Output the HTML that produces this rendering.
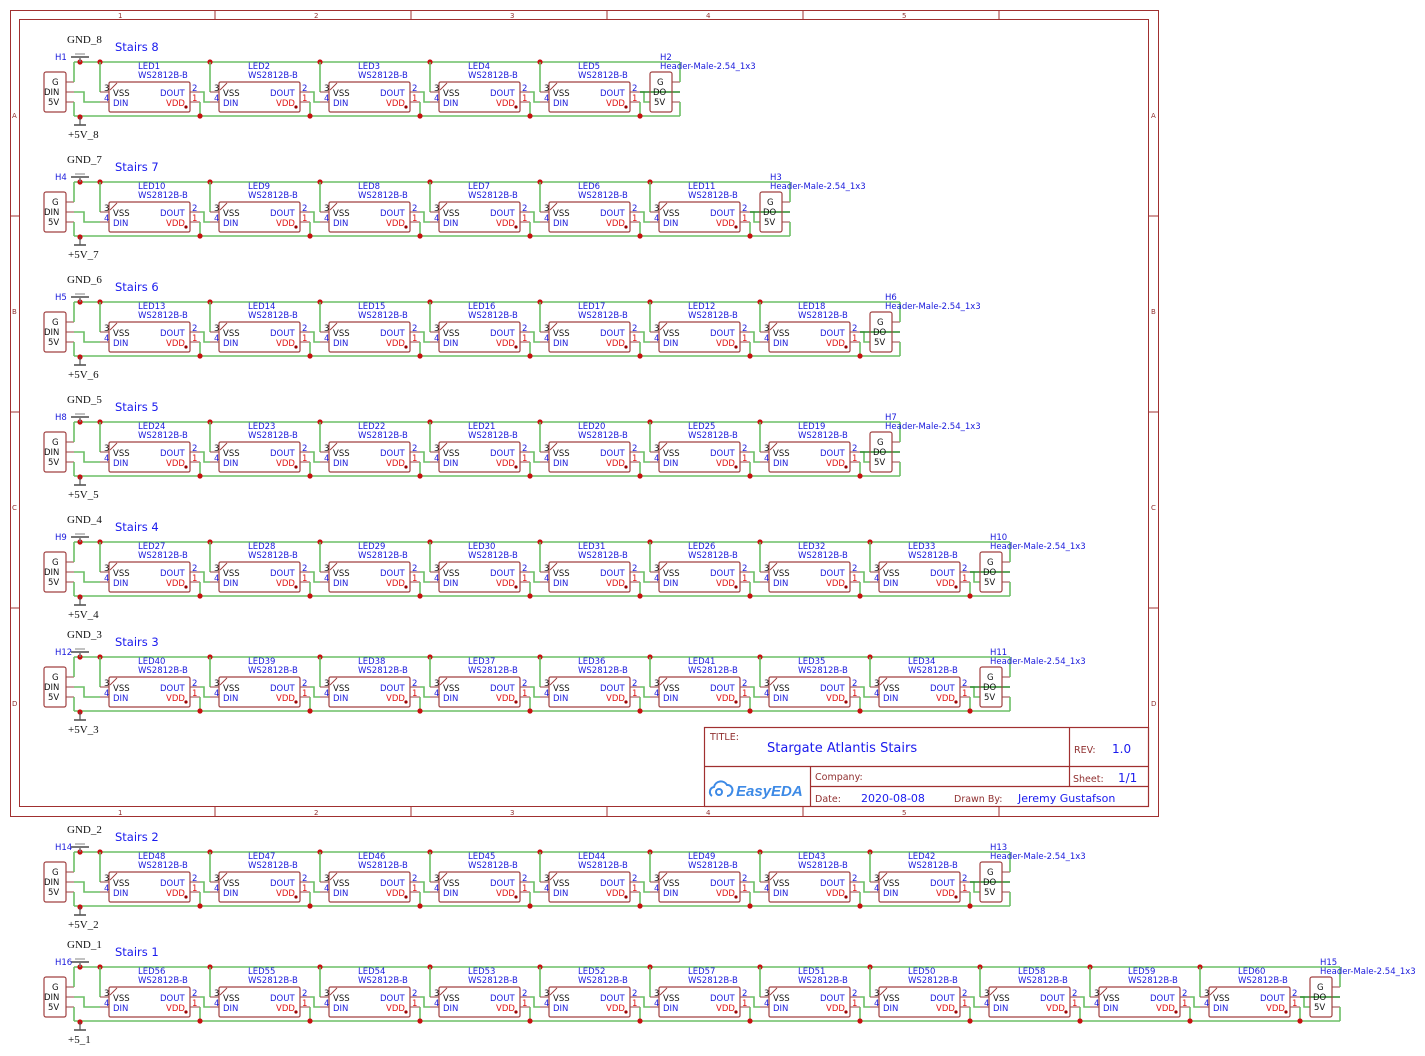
<!DOCTYPE html>
<html><head><meta charset="utf-8">
<style>
html,body{margin:0;padding:0;background:#fff}
svg{display:block}
text{font-family:"DejaVu Sans","Liberation Sans",sans-serif}
.w{stroke:#6cbf66;stroke-width:1.6;fill:none}
.p{stroke:#9a4040;stroke-width:1;fill:none}
.b{fill:#1a1adc;font-size:8.5px}
.r{fill:#e01010;font-size:8.5px}
.k{fill:#111;font-size:8.5px}
.g{font-family:"Liberation Serif",serif;font-size:11px;fill:#111}
.st{fill:#1a1aee;font-size:11.5px}
.fr{stroke:#a03030;fill:none;stroke-width:1}
.fn{fill:#903030;font-size:7px}
</style></head><body>
<svg width="1425" height="1056" viewBox="0 0 1425 1056" xmlns="http://www.w3.org/2000/svg" xmlns:xlink="http://www.w3.org/1999/xlink">
<defs>
<g id="u">
 <circle cx="0" cy="0" r="2.6" fill="#c81010"/>
 <polyline class="w" points="0,0 0,30"/>
 <line class="p" x1="0" y1="30" x2="9" y2="30"/>
 <line class="p" x1="0" y1="40" x2="9" y2="40"/>
 <line class="p" x1="90" y1="30" x2="100" y2="30"/>
 <line class="p" x1="90" y1="40" x2="100" y2="40"/>
 <polyline class="w" points="100,30 104,30 104,40 110,40"/>
 <polyline class="w" points="100,40 100,54"/>
 <circle cx="100" cy="54" r="2.6" fill="#c81010"/>
 <rect x="9" y="20" width="81" height="30" rx="1.5" fill="#fff" stroke="#a04040" stroke-width="1.2"/>
 <path d="M10,28 L17,21" stroke="#a04040" stroke-width="1"/>
 <circle cx="86" cy="45" r="1.6" fill="#900"/>
 <text class="b" x="38" y="16">WS2812B-B</text>
 <text class="k" x="13" y="34">VSS</text>
 <text class="b" x="13" y="44">DIN</text>
 <text class="b" x="60" y="34">DOUT</text>
 <text class="r" x="66" y="44">VDD</text>
 <text class="k" x="4" y="29">3</text>
 <text class="b" x="4" y="39">4</text>
 <text class="b" x="92" y="29">2</text>
 <text class="r" x="92" y="39">1</text>
</g>
<g id="hl">
 <rect x="44" y="10" width="22" height="40" rx="2" fill="#fff" stroke="#a04040" stroke-width="1.2"/>
 <line class="p" x1="66" y1="20" x2="74" y2="20" stroke="#555"/>
 <line class="p" x1="66" y1="30" x2="74" y2="30"/>
 <line class="p" x1="66" y1="40" x2="74" y2="40"/>
 <polyline class="w" points="74,20 74,0"/>
 <polyline class="w" points="74,40 74,54"/>
 <polyline class="w" points="74,30 84,30 84,40 100,40"/>
 <circle cx="80" cy="0" r="2.6" fill="#c81010"/>
 <line x1="80" y1="0" x2="80" y2="-5" stroke="#777" stroke-width="1.5"/>
 <line x1="71" y1="-5" x2="89" y2="-5" stroke="#777" stroke-width="2"/>
 <line x1="75" y1="-8" x2="85" y2="-8" stroke="#999" stroke-width="1.2"/>
 <circle cx="80" cy="55" r="2.6" fill="#c81010"/>
 <line x1="80" y1="55" x2="80" y2="63" stroke="#555" stroke-width="1.2"/>
 <line x1="74" y1="63" x2="86" y2="63" stroke="#555" stroke-width="1.6"/>
 <text class="k" x="52" y="23">G</text>
 <text class="k" x="44" y="33">DIN</text>
 <text class="k" x="48" y="43">5V</text>
</g>
<g id="hr">
 <line x1="-10" y1="30" x2="30" y2="30" stroke="#2e8b2e" stroke-width="1.6"/>
 <rect x="0" y="10" width="22" height="40" rx="2" fill="none" stroke="#a04040" stroke-width="1.2"/>
 <line class="p" x1="22" y1="20" x2="30" y2="20"/>
 <line class="p" x1="22" y1="40" x2="30" y2="40"/>
 <polyline class="w" points="30,20 30,0"/>
 <polyline class="w" points="30,40 30,54"/>
 <text class="k" x="7" y="23">G</text>
 <text class="k" x="3" y="33">DO</text>
 <text class="k" x="4" y="43">5V</text>
</g>
</defs>

<!-- frame -->
<rect class="fr" x="10.5" y="10.5" width="1148" height="806"/>
<rect class="fr" x="19.5" y="19.5" width="1129" height="787"/>
<g stroke="#a03030" stroke-width="1">
<line x1="215" y1="10" x2="215" y2="19"/><line x1="411" y1="10" x2="411" y2="19"/><line x1="607" y1="10" x2="607" y2="19"/><line x1="803" y1="10" x2="803" y2="19"/><line x1="999" y1="10" x2="999" y2="19"/>
<line x1="215" y1="807" x2="215" y2="816"/><line x1="411" y1="807" x2="411" y2="816"/><line x1="607" y1="807" x2="607" y2="816"/><line x1="803" y1="807" x2="803" y2="816"/><line x1="999" y1="807" x2="999" y2="816"/>
<line x1="10" y1="216" x2="19" y2="216"/><line x1="10" y1="412" x2="19" y2="412"/><line x1="10" y1="608" x2="19" y2="608"/>
<line x1="1149" y1="216" x2="1158" y2="216"/><line x1="1149" y1="412" x2="1158" y2="412"/><line x1="1149" y1="608" x2="1158" y2="608"/>
</g>
<text class="fn" x="118" y="18">1</text><text class="fn" x="314" y="18">2</text><text class="fn" x="510" y="18">3</text><text class="fn" x="706" y="18">4</text><text class="fn" x="902" y="18">5</text>
<text class="fn" x="118" y="815">1</text><text class="fn" x="314" y="815">2</text><text class="fn" x="510" y="815">3</text><text class="fn" x="706" y="815">4</text><text class="fn" x="902" y="815">5</text>
<text class="fn" x="12" y="118">A</text><text class="fn" x="12" y="314">B</text><text class="fn" x="12" y="510">C</text><text class="fn" x="12" y="706">D</text>
<text class="fn" x="1151" y="118">A</text><text class="fn" x="1151" y="314">B</text><text class="fn" x="1151" y="510">C</text><text class="fn" x="1151" y="706">D</text>

<!-- title block -->
<g stroke="#a03030" stroke-width="1.2" fill="none">
<rect x="704.5" y="727.5" width="444" height="79"/>
<line x1="704" y1="766.5" x2="1149" y2="766.5"/>
<line x1="810" y1="786.5" x2="1149" y2="786.5"/>
<line x1="1069.5" y1="727" x2="1069.5" y2="787"/>
<line x1="810.5" y1="766" x2="810.5" y2="807"/>
</g>
<text x="710" y="740" style="fill:#903030;font-size:9.5px">TITLE:</text>
<text x="767" y="752" style="fill:#1a1aee;font-size:13px">Stargate Atlantis Stairs</text>
<text x="1074" y="753" style="fill:#903030;font-size:9.5px">REV:</text>
<text x="1112" y="753" style="fill:#1a1aee;font-size:12px">1.0</text>
<text x="815" y="780" style="fill:#903030;font-size:9.5px">Company:</text>
<text x="1073" y="782" style="fill:#903030;font-size:9.5px">Sheet:</text>
<text x="1118" y="782" style="fill:#1a1aee;font-size:12px">1/1</text>
<text x="815" y="802" style="fill:#903030;font-size:9.5px">Date:</text>
<text x="861" y="802" style="fill:#1a1aee;font-size:11px">2020-08-08</text>
<text x="954" y="802" style="fill:#903030;font-size:9.5px">Drawn By:</text>
<text x="1018" y="802" style="fill:#1a1aee;font-size:11px">Jeremy Gustafson</text>
<path d="M712,796 a5,5 0 0 1 2,-9 a7,7 0 0 1 13,-2 a5,5 0 0 1 5,7 a5,5 0 0 1 -5,4 M716,792 a3,3 0 1 1 6,0 a3,3 0 1 1 -6,0" stroke="#3d8ae6" stroke-width="2" fill="none"/>
<text x="736" y="796" style="fill:#3d8ae6;font-size:15px;font-weight:bold;font-style:italic;font-family:'Liberation Sans',sans-serif">EasyEDA</text>

<!-- Row 1 -->
<g transform="translate(0,62)">
<line class="w" x1="74" y1="0" x2="680" y2="0"/><line class="w" x1="74" y1="54" x2="680" y2="54"/>
<use href="#hl"/>
<text class="g" x="67" y="-19">GND_8</text><text class="g" x="68" y="76">+5V_8</text>
<text class="b" x="55" y="-2">H1</text><text class="st" x="115" y="-11">Stairs 8</text>
<use href="#u" x="100"/><use href="#u" x="210"/><use href="#u" x="320"/><use href="#u" x="430"/><use href="#u" x="540"/>
<text class="b" x="138" y="7">LED1</text><text class="b" x="248" y="7">LED2</text><text class="b" x="358" y="7">LED3</text><text class="b" x="468" y="7">LED4</text><text class="b" x="578" y="7">LED5</text>
<use href="#hr" x="650"/>
<text class="b" x="660" y="-2">H2</text><text class="b" x="660" y="7">Header-Male-2.54_1x3</text>
</g>

<!-- Row 2 -->
<g transform="translate(0,182)">
<line class="w" x1="74" y1="0" x2="790" y2="0"/><line class="w" x1="74" y1="54" x2="790" y2="54"/>
<use href="#hl"/>
<text class="g" x="67" y="-19">GND_7</text><text class="g" x="68" y="76">+5V_7</text>
<text class="b" x="55" y="-2">H4</text><text class="st" x="115" y="-11">Stairs 7</text>
<use href="#u" x="100"/><use href="#u" x="210"/><use href="#u" x="320"/><use href="#u" x="430"/><use href="#u" x="540"/><use href="#u" x="650"/>
<text class="b" x="138" y="7">LED10</text><text class="b" x="248" y="7">LED9</text><text class="b" x="358" y="7">LED8</text><text class="b" x="468" y="7">LED7</text><text class="b" x="578" y="7">LED6</text><text class="b" x="688" y="7">LED11</text>
<use href="#hr" x="760"/>
<text class="b" x="770" y="-2">H3</text><text class="b" x="770" y="7">Header-Male-2.54_1x3</text>
</g>

<!-- Row 3 -->
<g transform="translate(0,302)">
<line class="w" x1="74" y1="0" x2="900" y2="0"/><line class="w" x1="74" y1="54" x2="900" y2="54"/>
<use href="#hl"/>
<text class="g" x="67" y="-19">GND_6</text><text class="g" x="68" y="76">+5V_6</text>
<text class="b" x="55" y="-2">H5</text><text class="st" x="115" y="-11">Stairs 6</text>
<use href="#u" x="100"/><use href="#u" x="210"/><use href="#u" x="320"/><use href="#u" x="430"/><use href="#u" x="540"/><use href="#u" x="650"/><use href="#u" x="760"/>
<text class="b" x="138" y="7">LED13</text><text class="b" x="248" y="7">LED14</text><text class="b" x="358" y="7">LED15</text><text class="b" x="468" y="7">LED16</text><text class="b" x="578" y="7">LED17</text><text class="b" x="688" y="7">LED12</text><text class="b" x="798" y="7">LED18</text>
<use href="#hr" x="870"/>
<text class="b" x="885" y="-2">H6</text><text class="b" x="885" y="7">Header-Male-2.54_1x3</text>
</g>

<!-- Row 4 -->
<g transform="translate(0,422)">
<line class="w" x1="74" y1="0" x2="900" y2="0"/><line class="w" x1="74" y1="54" x2="900" y2="54"/>
<use href="#hl"/>
<text class="g" x="67" y="-19">GND_5</text><text class="g" x="68" y="76">+5V_5</text>
<text class="b" x="55" y="-2">H8</text><text class="st" x="115" y="-11">Stairs 5</text>
<use href="#u" x="100"/><use href="#u" x="210"/><use href="#u" x="320"/><use href="#u" x="430"/><use href="#u" x="540"/><use href="#u" x="650"/><use href="#u" x="760"/>
<text class="b" x="138" y="7">LED24</text><text class="b" x="248" y="7">LED23</text><text class="b" x="358" y="7">LED22</text><text class="b" x="468" y="7">LED21</text><text class="b" x="578" y="7">LED20</text><text class="b" x="688" y="7">LED25</text><text class="b" x="798" y="7">LED19</text>
<use href="#hr" x="870"/>
<text class="b" x="885" y="-2">H7</text><text class="b" x="885" y="7">Header-Male-2.54_1x3</text>
</g>

<!-- Row 5 -->
<g transform="translate(0,542)">
<line class="w" x1="74" y1="0" x2="1010" y2="0"/><line class="w" x1="74" y1="54" x2="1010" y2="54"/>
<use href="#hl"/>
<text class="g" x="67" y="-19">GND_4</text><text class="g" x="68" y="76">+5V_4</text>
<text class="b" x="55" y="-2">H9</text><text class="st" x="115" y="-11">Stairs 4</text>
<use href="#u" x="100"/><use href="#u" x="210"/><use href="#u" x="320"/><use href="#u" x="430"/><use href="#u" x="540"/><use href="#u" x="650"/><use href="#u" x="760"/><use href="#u" x="870"/>
<text class="b" x="138" y="7">LED27</text><text class="b" x="248" y="7">LED28</text><text class="b" x="358" y="7">LED29</text><text class="b" x="468" y="7">LED30</text><text class="b" x="578" y="7">LED31</text><text class="b" x="688" y="7">LED26</text><text class="b" x="798" y="7">LED32</text><text class="b" x="908" y="7">LED33</text>
<use href="#hr" x="980"/>
<text class="b" x="990" y="-2">H10</text><text class="b" x="990" y="7">Header-Male-2.54_1x3</text>
</g>

<!-- Row 6 -->
<g transform="translate(0,657)">
<line class="w" x1="74" y1="0" x2="1010" y2="0"/><line class="w" x1="74" y1="54" x2="1010" y2="54"/>
<use href="#hl"/>
<text class="g" x="67" y="-19">GND_3</text><text class="g" x="68" y="76">+5V_3</text>
<text class="b" x="55" y="-2">H12</text><text class="st" x="115" y="-11">Stairs 3</text>
<use href="#u" x="100"/><use href="#u" x="210"/><use href="#u" x="320"/><use href="#u" x="430"/><use href="#u" x="540"/><use href="#u" x="650"/><use href="#u" x="760"/><use href="#u" x="870"/>
<text class="b" x="138" y="7">LED40</text><text class="b" x="248" y="7">LED39</text><text class="b" x="358" y="7">LED38</text><text class="b" x="468" y="7">LED37</text><text class="b" x="578" y="7">LED36</text><text class="b" x="688" y="7">LED41</text><text class="b" x="798" y="7">LED35</text><text class="b" x="908" y="7">LED34</text>
<use href="#hr" x="980"/>
<text class="b" x="990" y="-2">H11</text><text class="b" x="990" y="7">Header-Male-2.54_1x3</text>
</g>

<!-- Row 7 -->
<g transform="translate(0,852)">
<line class="w" x1="74" y1="0" x2="1010" y2="0"/><line class="w" x1="74" y1="54" x2="1010" y2="54"/>
<use href="#hl"/>
<text class="g" x="67" y="-19">GND_2</text><text class="g" x="68" y="76">+5V_2</text>
<text class="b" x="55" y="-2">H14</text><text class="st" x="115" y="-11">Stairs 2</text>
<use href="#u" x="100"/><use href="#u" x="210"/><use href="#u" x="320"/><use href="#u" x="430"/><use href="#u" x="540"/><use href="#u" x="650"/><use href="#u" x="760"/><use href="#u" x="870"/>
<text class="b" x="138" y="7">LED48</text><text class="b" x="248" y="7">LED47</text><text class="b" x="358" y="7">LED46</text><text class="b" x="468" y="7">LED45</text><text class="b" x="578" y="7">LED44</text><text class="b" x="688" y="7">LED49</text><text class="b" x="798" y="7">LED43</text><text class="b" x="908" y="7">LED42</text>
<use href="#hr" x="980"/>
<text class="b" x="990" y="-2">H13</text><text class="b" x="990" y="7">Header-Male-2.54_1x3</text>
</g>

<!-- Row 8 -->
<g transform="translate(0,967)">
<line class="w" x1="74" y1="0" x2="1340" y2="0"/><line class="w" x1="74" y1="54" x2="1340" y2="54"/>
<use href="#hl"/>
<text class="g" x="67" y="-19">GND_1</text><text class="g" x="68" y="76">+5_1</text>
<text class="b" x="55" y="-2">H16</text><text class="st" x="115" y="-11">Stairs 1</text>
<use href="#u" x="100"/><use href="#u" x="210"/><use href="#u" x="320"/><use href="#u" x="430"/><use href="#u" x="540"/><use href="#u" x="650"/><use href="#u" x="760"/><use href="#u" x="870"/><use href="#u" x="980"/><use href="#u" x="1090"/><use href="#u" x="1200"/>
<text class="b" x="138" y="7">LED56</text><text class="b" x="248" y="7">LED55</text><text class="b" x="358" y="7">LED54</text><text class="b" x="468" y="7">LED53</text><text class="b" x="578" y="7">LED52</text><text class="b" x="688" y="7">LED57</text><text class="b" x="798" y="7">LED51</text><text class="b" x="908" y="7">LED50</text><text class="b" x="1018" y="7">LED58</text><text class="b" x="1128" y="7">LED59</text><text class="b" x="1238" y="7">LED60</text>
<use href="#hr" x="1310"/>
<text class="b" x="1320" y="-2">H15</text><text class="b" x="1320" y="7">Header-Male-2.54_1x3</text>
</g>
</svg>
</body></html>
